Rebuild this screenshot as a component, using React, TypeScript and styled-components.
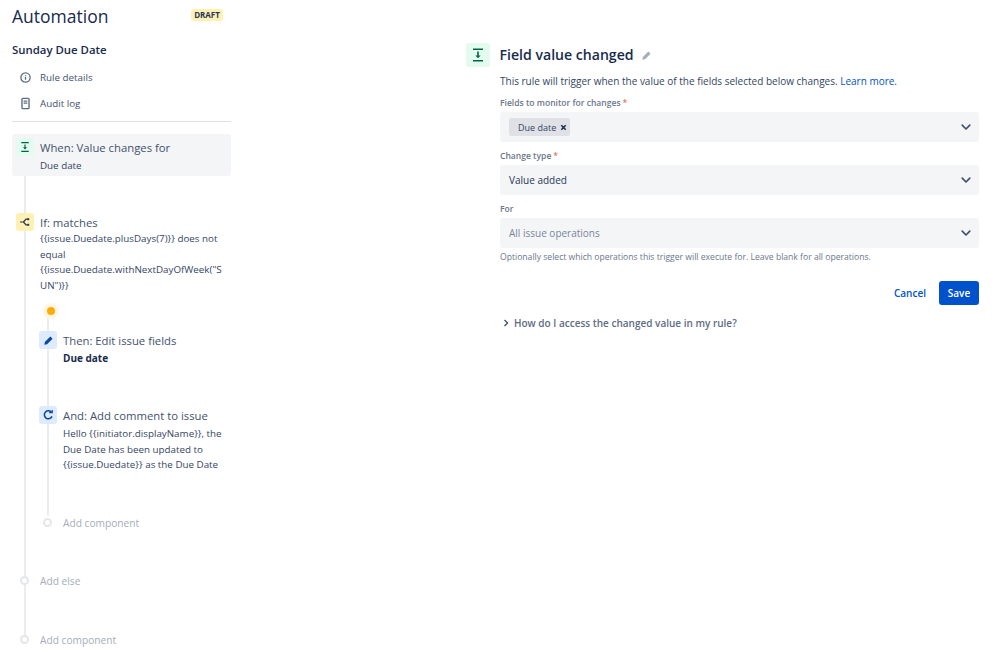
import React from "react";
import styled, { createGlobalStyle } from "styled-components";

const Global = createGlobalStyle`
  html, body { margin: 0; padding: 0; background: #fff; overflow: hidden; }
  body { font-family: "Open Sans", "Noto Sans", "Liberation Sans", sans-serif; color: #253858; }
`;

const Page = styled.div`
  display: flex;
  width: 999px;
  height: 652px;
  overflow: hidden;
`;

const Sidebar = styled.aside`
  width: 219px;
  margin-left: 12px;
  flex: none;
  display: flex;
  flex-direction: column;
`;

const Header = styled.div`
  display: flex;
  justify-content: space-between;
  align-items: flex-start;
  height: 33px;
  padding-top: 4px;
  padding-right: 8px;
`;

const Title = styled.h1`
  margin: 0;
  font-size: 17.5px;
  line-height: 24px;
  font-weight: 500;
  color: #172b4d;
`;

const Lozenge = styled.span`
  margin-top: 5px;
  width: 32px;
  height: 12px;
  border-radius: 3px;
  background: #fff0b3;
  color: #253858;
  font-size: 8px;
  line-height: 12px;
  font-weight: 700;
  text-align: center;
`;

const RuleName = styled.h2`
  margin: 5px 0 0;
  font-size: 11.4px;
  line-height: 16px;
  font-weight: 600;
  color: #172b4d;
`;

const NavList = styled.nav`
  display: flex;
  flex-direction: column;
  margin-top: 6px;
  padding-bottom: 5px;
  border-bottom: 1px solid #dfe1e6;
`;

const NavItem = styled.div`
  display: flex;
  align-items: center;
  height: 26px;
  padding-left: 7px;
  gap: 8px;
  font-size: 9.8px;
  color: #42526e;
`;

const NavIcon = styled.svg`
  width: 13px;
  height: 13px;
  color: #5e6c84;
  flex: none;
`;

const Flow = styled.div`
  position: relative;
  margin-top: 12px;
  display: flex;
  flex-direction: column;
  &::before {
    content: "";
    position: absolute;
    left: 12px;
    top: 20px;
    height: 486px;
    width: 2px;
    background: #ebecf0;
  }
`;

const Step = styled.div<{ $selected?: boolean; $top?: number; $height?: number }>`
  position: relative;
  display: flex;
  gap: 6px;
  box-sizing: border-box;
  margin-top: ${(p) => p.$top ?? 0}px;
  min-height: ${(p) => p.$height ?? 0}px;
  padding: 4px 4px 0;
  border-radius: 3px;
  background: ${(p) => (p.$selected ? "#f4f5f7" : "transparent")};
`;

const IconTile = styled.span<{ $bg: string; $fg: string }>`
  width: 18px;
  height: 18px;
  flex: none;
  border-radius: 3px;
  background: ${(p) => p.$bg};
  color: ${(p) => p.$fg};
  display: flex;
  align-items: center;
  justify-content: center;
`;

const StepBody = styled.div`
  min-width: 0;
  flex: 1;
`;

const StepTitle = styled.div`
  font-size: 11.3px;
  line-height: 20px;
  color: #42526e;
`;

const StepText = styled.div<{ $tight?: boolean }>`
  font-size: 9.8px;
  line-height: 15.5px;
  margin-top: ${(p) => (p.$tight ? -2 : 0)}px;
  color: #344563;
  overflow-wrap: anywhere;
`;

const StepStrong = styled.div`
  font-size: 10px;
  line-height: 15px;
  font-weight: 700;
  color: #172b4d;
`;

const Branch = styled.div`
  position: relative;
  margin-left: 23px;
  display: flex;
  flex-direction: column;
  &::before {
    content: "";
    position: absolute;
    left: 12px;
    top: 18px;
    height: 205px;
    width: 2px;
    background: #ebecf0;
  }
`;

const Pending = styled.div`
  position: relative;
  margin: 10px 0 0 8px;
  width: 16px;
  height: 16px;
  border-radius: 50%;
  background: #fff7e6;
  display: flex;
  align-items: center;
  justify-content: center;
  &::after {
    content: "";
    width: 8px;
    height: 8px;
    border-radius: 50%;
    background: #ffab00;
  }
`;

const AddRow = styled.div<{ $top: number }>`
  position: relative;
  display: flex;
  align-items: center;
  margin-top: ${(p) => p.$top}px;
  padding-left: 8px;
  gap: 11px;
  height: 16px;
  font-size: 10.2px;
  color: #a5adba;
`;

const AddDot = styled.span`
  box-sizing: border-box;
  width: 9px;
  height: 9px;
  border-radius: 50%;
  border: 2px solid #e4e6ea;
  background: #fff;
  flex: none;
`;

const Main = styled.main`
  margin-left: 235px;
  width: 513px;
  flex: none;
  padding-top: 43px;
`;

const MainHead = styled.div`
  display: flex;
  align-items: center;
  height: 24px;
`;

const BigTile = styled(IconTile)`
  width: 24px;
  height: 24px;
`;

const MainTitle = styled.h2`
  margin: 0 0 0 9.5px;
  font-size: 14.1px;
  font-weight: 600;
  line-height: 24px;
  color: #172b4d;
`;

const PencilWrap = styled.span`
  margin-left: 7px;
  color: #a5adba;
  display: flex;
`;

const Form = styled.div`
  margin-left: 34px;
`;

const Intro = styled.p`
  margin: 6px 0 0;
  font-size: 10px;
  line-height: 16px;
  color: #344563;
`;

const Link = styled.a`
  color: #0052cc;
`;

const Label = styled.label`
  display: block;
  margin-top: 8px;
  font-size: 8.55px;
  line-height: 12px;
  font-weight: 600;
  color: #6b778c;
`;

const Req = styled.span`
  color: #e5593a;
  margin-left: 2px;
  font-weight: 400;
`;

const Select = styled.div<{ $muted?: boolean }>`
  display: flex;
  align-items: center;
  justify-content: space-between;
  box-sizing: border-box;
  height: 30px;
  margin-top: 3px;
  padding: 0 7px 0 9px;
  background: #f4f5f7;
  border-radius: 3px;
  font-size: 10px;
  color: ${(p) => (p.$muted ? "#7a869a" : "#253858")};
`;

const Tag = styled.span`
  display: flex;
  align-items: center;
  gap: 4px;
  height: 18px;
  padding: 0 3px 0 9px;
  background: #dfe1e6;
  border-radius: 2px;
  font-size: 9px;
  color: #344563;
`;

const Chevron = styled.svg`
  width: 12px;
  height: 12px;
  color: #42526e;
`;

const Help = styled.p`
  margin: 2px 0 0;
  font-size: 8.6px;
  line-height: 14px;
  color: #6b778c;
`;

const Actions = styled.div`
  display: flex;
  justify-content: flex-end;
  align-items: center;
  gap: 13px;
  margin-top: 17px;
`;

const Cancel = styled.button`
  border: 0;
  background: none;
  padding: 0;
  font: 600 10px "Open Sans", sans-serif;
  color: #0052cc;
`;

const Save = styled.button`
  border: 0;
  width: 40px;
  height: 24px;
  padding: 0;
  border-radius: 3px;
  background: #0052cc;
  color: #fff;
  font: 600 10px "Open Sans", sans-serif;
`;

const Disclosure = styled.div`
  display: flex;
  align-items: center;
  gap: 4px;
  margin-top: 10px;
  padding-left: 2px;
  font-size: 10px;
  line-height: 16px;
  font-weight: 600;
  color: #5e6c84;
`;

const TriggerIcon = ({ size }: { size: number }) => (
  <svg width={size} height={size} viewBox="0 0 16 16" fill="none" stroke="currentColor" strokeWidth="1.6">
    <path d="M3 2.2h10M3 13.8h10" />
    <path d="M8 4.5v5.5" />
    <path d="M5.4 8.4h5.2L8 11.2z" fill="currentColor" stroke="none" />
  </svg>
);

const Pencil = ({ size }: { size: number }) => (
  <svg width={size} height={size} viewBox="0 0 12 12" fill="currentColor">
    <path d="M8 1.6 10.4 4 4.4 10 1.5 10.5 2 7.6z" />
  </svg>
);

const Down = () => (
  <Chevron viewBox="0 0 12 12" fill="none" stroke="currentColor" strokeWidth="1.7" strokeLinecap="round" strokeLinejoin="round">
    <path d="M2.2 4.2 6 8l3.8-3.8" />
  </Chevron>
);

export default function App() {
  return (
    <Page>
      <Global />
      <Sidebar>
        <Header>
          <Title>Automation</Title>
          <Lozenge>DRAFT</Lozenge>
        </Header>
        <RuleName>Sunday Due Date</RuleName>
        <NavList>
          <NavItem>
            <NavIcon viewBox="0 0 14 14" fill="none" stroke="currentColor" strokeWidth="1.4">
              <circle cx="7" cy="7" r="5" />
              <path d="M7 6.2v3.2M7 4.2v1" />
            </NavIcon>
            Rule details
          </NavItem>
          <NavItem>
            <NavIcon viewBox="0 0 14 14" fill="none" stroke="currentColor" strokeWidth="1.5">
              <rect x="3.2" y="1.5" width="7.6" height="11" rx="1" />
              <path d="M5 4.4h4M5 6.6h4" />
            </NavIcon>
            Audit log
          </NavItem>
        </NavList>
        <Flow>
          <Step $selected $height={42}>
            <IconTile $bg="#e3fcef" $fg="#006644"><TriggerIcon size={12} /></IconTile>
            <StepBody>
              <StepTitle>When: Value changes for</StepTitle>
              <StepText>Due date</StepText>
            </StepBody>
          </Step>
          <Step $top={33}>
            <IconTile $bg="#fff0b3" $fg="#253858">
              <svg width="12" height="12" viewBox="0 0 12 12" fill="none" stroke="currentColor" strokeWidth="1.2">
                <path d="M1 6h3.5M4.5 6 7 3.2h1.5M4.5 6 7 8.8h1.5" />
                <rect x="8.2" y="2.2" width="2" height="2" fill="currentColor" stroke="none" />
                <rect x="8.2" y="7.8" width="2" height="2" fill="currentColor" stroke="none" />
              </svg>
            </IconTile>
            <StepBody>
              <StepTitle>If: matches</StepTitle>
              <StepText $tight>
                {"{{issue.Duedate.plusDays(7)}} does not equal {{issue.Duedate.withNextDayOfWeek(\"SUN\")}}"}
              </StepText>
            </StepBody>
          </Step>
          <Branch>
            <Pending />
            <Step $top={8} $height={75}>
              <IconTile $bg="#deebff" $fg="#0747a6"><Pencil size={11} /></IconTile>
              <StepBody>
                <StepTitle>Then: Edit issue fields</StepTitle>
                <StepStrong>Due date</StepStrong>
              </StepBody>
            </Step>
            <Step>
              <IconTile $bg="#deebff" $fg="#0747a6">
                <svg width="12" height="12" viewBox="0 0 12 12" fill="none" stroke="currentColor" strokeWidth="1.5">
                  <path d="M9.6 3.4A4 4 0 1 0 10 7.4" />
                  <path d="M7.2 3.6h3V.9" strokeWidth="1.2" />
                </svg>
              </IconTile>
              <StepBody>
                <StepTitle>And: Add comment to issue</StepTitle>
                <StepText>{"Hello {{initiator.displayName}}, the Due Date has been updated to {{issue.Duedate}} as the Due Date"}</StepText>
              </StepBody>
            </Step>
            <AddRow $top={42}>
              <AddDot />
              Add component
            </AddRow>
          </Branch>
          <AddRow $top={42}><AddDot />Add else</AddRow>
          <AddRow $top={43}><AddDot />Add component</AddRow>
        </Flow>
      </Sidebar>
      <Main>
        <MainHead>
          <BigTile $bg="#e3fcef" $fg="#006644"><TriggerIcon size={16} /></BigTile>
          <MainTitle>Field value changed</MainTitle>
          <PencilWrap><Pencil size={11} /></PencilWrap>
        </MainHead>
        <Form>
          <Intro>This rule will trigger when the value of the fields selected below changes. <Link>Learn more.</Link></Intro>
          <Label>Fields to monitor for changes<Req>*</Req></Label>
          <Select>
            <Tag>
              Due date
              <svg width="7" height="7" viewBox="0 0 8 8" stroke="#172b4d" strokeWidth="1.8"><path d="M1.5 1.5l5 5M6.5 1.5l-5 5" /></svg>
            </Tag>
            <Down />
          </Select>
          <Label>Change type<Req>*</Req></Label>
          <Select>Value added<Down /></Select>
          <Label>For</Label>
          <Select $muted>All issue operations<Down /></Select>
          <Help>Optionally select which operations this trigger will execute for. Leave blank for all operations.</Help>
          <Actions>
            <Cancel>Cancel</Cancel>
            <Save>Save</Save>
          </Actions>
          <Disclosure>
            <svg width="8" height="8" viewBox="0 0 8 8" fill="none" stroke="#42526e" strokeWidth="1.4"><path d="M2.5 1 5.5 4 2.5 7" /></svg>
            How do I access the changed value in my rule?
          </Disclosure>
        </Form>
      </Main>
    </Page>
  );
}
